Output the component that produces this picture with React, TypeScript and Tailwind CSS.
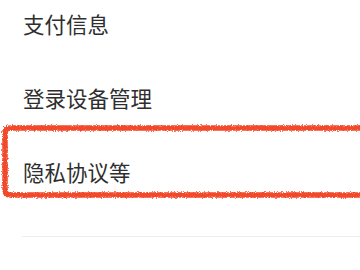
import React from "react";

export default function App() {
  const font = { fontFamily: '"Noto Sans CJK SC", "Noto Sans", sans-serif' };
  return (
    <div className="relative w-[360px] h-[270px] overflow-hidden bg-white" style={font}>
      <div className="flex flex-col mt-[-13px]">
        <div className="h-[74px] flex items-center pl-[23px] text-[21.5px] text-[#2e2e2e]">支付信息</div>
        <div className="h-[74px] flex items-center pl-[23px] text-[21.5px] text-[#2e2e2e]">登录设备管理</div>
        <div className="h-[74px] flex items-center pl-[23px] text-[21.5px] text-[#2e2e2e]">隐私协议等</div>
        <div className="mt-[27px] ml-[22px] h-px bg-[#eeeeee]" />
      </div>
      <svg className="absolute left-0 top-0 pointer-events-none" width="360" height="270" viewBox="0 0 360 270">
        <defs>
          <filter id="rough" x="-5%" y="-20%" width="110%" height="140%">
            <feTurbulence type="fractalNoise" baseFrequency="1.2" numOctaves="3" seed="5" result="n" />
            <feDisplacementMap in="SourceGraphic" in2="n" scale="3.5" />
          </filter>
        </defs>
        <path
          d="M380 128 L10 128 Q5 128 5 133 L5 190 Q5 195 10 195 L380 195"
          fill="none"
          stroke="#f24a2b"
          strokeWidth="5.5"
          filter="url(#rough)"
        />
      </svg>
    </div>
  );
}
